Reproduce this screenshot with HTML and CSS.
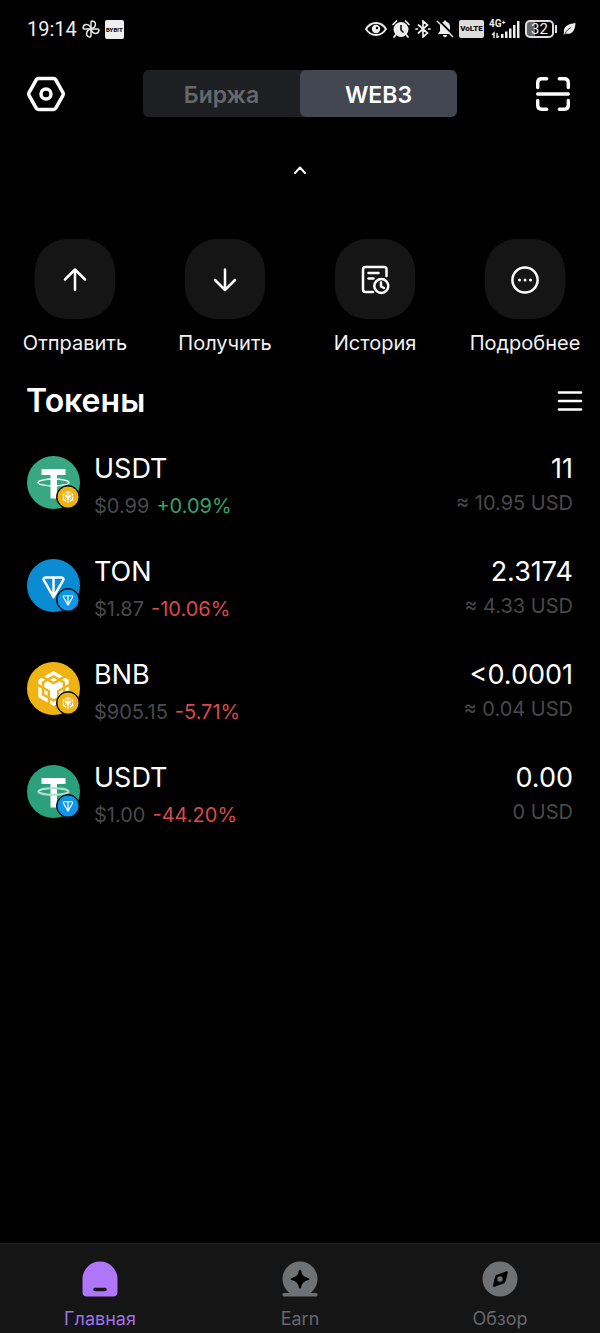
FILE: index.html
```html
<!DOCTYPE html>
<html lang="ru">
<head>
<meta charset="utf-8">
<meta name="viewport" content="width=device-width, initial-scale=1">
<title>Web3</title>
<link rel="stylesheet" href="styles.css">
</head>
<body>
<svg class="defs" width="0" height="0" aria-hidden="true">
  <symbol id="bnb" viewBox="0 0 24 24"><path fill="#fff" d="M5.631 3.676 12.001 0l6.367 3.676-2.34 1.358L12 2.716 7.972 5.034l-2.34-1.358Zm12.737 4.636-2.34-1.358L12 9.272 7.972 6.954l-2.34 1.358v2.716l4.026 2.318v4.636L12 19.341l2.341-1.359v-4.636l4.027-2.318V8.312Zm0 7.352v-2.716l-2.34 1.358v2.716l2.34-1.358Zm1.663.96-4.027 2.318v2.717l6.368-3.677V10.63l-2.34 1.358v4.636Zm-2.34-10.63 2.34 1.358v2.716l2.341-1.358V5.994l-2.34-1.358-2.342 1.358Zm-8.033 13.654v2.716L12 24l2.341-1.358v-2.716l-2.34 1.358-2.342-1.358Zm-4.026-6.7v2.716l2.34 1.358v-2.716l-2.34-1.358Zm4.026-6.954L12 7.352l2.341-1.358-2.34-1.358-2.342 1.358Zm-5.69 1.358 2.342-1.358-2.342-1.358-2.34 1.358v2.716l2.34 1.358V7.352Zm0 4.636L1.628 10.63v7.353l6.367 3.676v-2.717L3.97 16.624v-4.636Z"/></symbol>
  <symbol id="ton" viewBox="0 0 24 24"><path fill="none" stroke="#fff" stroke-width="2.600" stroke-linejoin="round" d="M3.500 1.600h17c1.600 0 2.300 1.500 1.600 2.700L12 22 1.900 4.300C1.200 3.100 1.900 1.600 3.500 1.600zM12 1.600v20"/></symbol>
  <symbol id="coin-bnb" viewBox="0 0 53 53"><circle cx="26.500" cy="26.500" r="26.500" fill="#efb413"/><use href="#bnb" x="9" y="9" width="35" height="35"/></symbol>
  <symbol id="coin-ton" viewBox="0 0 53 53"><circle cx="26.500" cy="26.500" r="26.500" fill="#0a8bd2"/><use href="#ton" x="15" y="17" width="23" height="23"/></symbol>
  <symbol id="coin-usdt" viewBox="0 0 53 53"><circle cx="26.500" cy="26.500" r="26.500" fill="#37a881"/><path fill="#fff" d="M14.500 13h24v6H30v23.500h-6.500V19h-9z"/><ellipse cx="26.500" cy="26.500" rx="15.500" ry="3.500" fill="none" stroke="#fff" stroke-width="1.300"/></symbol>
  <symbol id="coin-usdt-soft" viewBox="0 0 53 53"><circle cx="26.500" cy="26.500" r="26.500" fill="#2aa17a"/><path fill="#fff" d="M14.500 13h24v6H30v23.500h-6.500V19h-9z"/><ellipse cx="26.500" cy="26.500" rx="15" ry="3.300" fill="none" stroke="#b5ddd0" stroke-width="2"/></symbol>
  <symbol id="net-bnb" viewBox="0 0 22 22"><circle cx="11" cy="11" r="10.500" fill="#efb413"/><use href="#bnb" x="5" y="5" width="12" height="12"/></symbol>
  <symbol id="net-ton" viewBox="0 0 22 22"><circle cx="11" cy="11" r="10.500" fill="#0c97ec"/><use href="#ton" x="5.500" y="6" width="11" height="11"/></symbol>
</svg>

<div class="status">
  <div class="status-group">
    <time class="clock">19:14</time>
    <svg width="18" height="18" viewBox="0 0 18 18" fill="none" stroke="#e8e8e8" stroke-width="1.500" stroke-linejoin="round"><path id="blade" d="M9 9V2.200C9 1.500 9.500 1 10.200 1c2.200.3 3.400 1.900 3.200 3.700C13.200 6.800 11.400 8.400 9 9z"/><use href="#blade" transform="rotate(90 9 9)"/><use href="#blade" transform="rotate(180 9 9)"/><use href="#blade" transform="rotate(270 9 9)"/></svg>
    <span class="app-chip">BYB!T</span>
  </div>
  <div class="status-group status-right">
    <svg width="22" height="18" viewBox="0 0 22 18"><path d="M1 9c5-8 15-8 20 0-5 8-15 8-20 0z" fill="none" stroke="#eee" stroke-width="1.800"/><circle cx="11" cy="9" r="4.200" fill="#eee"/><circle cx="12" cy="8" r="1.200" fill="#000"/></svg>
    <svg width="18" height="18" viewBox="0 0 18 18"><circle cx="9" cy="9.500" r="7.500" fill="#eee"/><path d="M1 4.500 4.500 1M17 4.500 13.500 1M3.500 15 2 17M14.500 15l1.500 2" stroke="#eee" stroke-width="1.700" stroke-linecap="round"/><path d="M9 5v5l2.500 2.500" fill="none" stroke="#000" stroke-width="1.500"/></svg>
    <svg width="16" height="18" viewBox="0 0 16 18"><path d="m3.500 5 9 8L8 17V1l4.500 4-9 8M1 9h1.500M13.500 9H15" fill="none" stroke="#eee" stroke-width="1.700" stroke-linecap="round"/></svg>
    <svg width="18" height="18" viewBox="0 0 18 18"><path d="M9 0.500c.8 0 1.300.5 1.300 1.200 2.500.6 3.700 2.500 3.700 5V11l2 3H2l2-3V6.700c0-2.500 1.200-4.400 3.700-5C7.700 1 8.200.5 9 .5zM7 15h4c0 3-4 3-4 0z" fill="#eee"/><path d="m2.300 0 15.500 15.500" stroke="#000" stroke-width="2"/><path d="m1 1 16 16" stroke="#eee" stroke-width="1.500"/></svg>
    <span class="volte">VoLTE</span>
    <span class="cell"><span class="cell-type">4G⁺</span>
      <svg width="31" height="18" viewBox="0 0 31 18" fill="#eee"><path d="M12 14h2.500v4H12zM16 11.500h2.500V18H16zM20 8.500h2.500V18H20zM24 5h2.500v13H24zM28 1h2.500v17H28z"/><path d="M5 18v-5l-2 2M8 13v5l2-2" fill="none" stroke="#eee" stroke-width="1.400"/></svg></span>
    <span class="battery">32</span>
    <svg width="13" height="14" viewBox="0 0 13 14"><path d="M12.500 1C5 2 0 4.500 1 10.500L.5 13l2-1.500C9 13 12 9 12.500 1z" fill="#eee"/><path d="M2 11.500c1.500-3 3.500-4.500 6-6" stroke="#000" stroke-width=".8" fill="none"/></svg>
  </div>
</div>

<header class="top">
  <button class="icon-btn" aria-label="Настройки"><svg width="38" height="36" viewBox="0 0 38 36" fill="none" stroke="#fff" stroke-width="3.500" stroke-linejoin="round"><path d="M11.500 2.500h15q1.500 0 2.300 1.300l7 12.500q.9 1.700 0 3.400l-7 12.500q-.8 1.300-2.300 1.300h-15q-1.500 0-2.300-1.300l-7-12.500q-.9-1.700 0-3.400l7-12.500Q10 2.500 11.500 2.500z"/><circle cx="19" cy="18" r="5"/></svg></button>
  <div class="segment">
    <button class="segment-tab">Биржа</button>
    <button class="segment-tab active">WEB3</button>
  </div>
  <button class="icon-btn" aria-label="Сканировать"><svg width="36" height="36" viewBox="0 0 36 36" fill="none" stroke="#fff" stroke-width="3.400" stroke-linecap="round"><path d="M2.700 11.500V6.700q0-4 4-4h5M24.300 2.700h5q4 0 4 4v4.800M33.300 24.500v4.800q0 4-4 4h-5M11.700 33.300h-5q-4 0-4-4v-4.800M2.700 18h30.600"/></svg></button>
</header>

<main class="content">
  <button class="collapse" aria-label="Свернуть"><svg width="14" height="10" viewBox="0 0 14 10" fill="none" stroke="#fff" stroke-width="2" stroke-linecap="round" stroke-linejoin="round"><path d="m2 8 5-5.500L12 8"/></svg></button>

  <div class="actions">
    <button class="action"><span class="tile"><svg width="32" height="32" viewBox="0 0 32 32" class="line"><path d="M16 26V6M6 15.500 16 5.500l10 10"/></svg></span>Отправить</button>
    <button class="action"><span class="tile"><svg width="32" height="32" viewBox="0 0 32 32" class="line"><path d="M16 5.500v20M6 16l10 10 10-10"/></svg></span>Получить</button>
    <button class="action"><span class="tile"><svg width="32" height="32" viewBox="0 0 32 32" class="line"><path d="M14 28H6.500q-2.500 0-2.500-2.500v-20Q4 3 6.500 3h18.500Q27.500 3 27.500 5.500V12M9.500 9h10M9.500 14.500h5"/><circle cx="22.300" cy="22" r="7"/><path d="M22 18.500v4l3 1.500"/></svg></span>История</button>
    <button class="action"><span class="tile"><svg width="32" height="32" viewBox="0 0 32 32" class="line"><circle cx="16" cy="16" r="12.600"/><path class="dots" d="M10.500 16h0M16 16h0M21.500 16h0"/></svg></span>Подробнее</button>
  </div>

  <div class="section-head">
    <h1 class="title">Токены</h1>
    <button class="icon-btn" aria-label="Меню"><svg width="26" height="22" viewBox="0 0 26 22" stroke="#fff" stroke-width="2.600" stroke-linecap="round"><path d="M2 2.500h22M2 11h22M2 19.500h22"/></svg></button>
  </div>

  <ul class="tokens">
    <li class="token">
      <span class="coin"><svg class="coin-main"><use href="#coin-usdt"/></svg><svg class="coin-net"><use href="#net-bnb"/></svg></span>
      <div class="info"><div class="name">USDT</div><div class="price"><span>$0.99</span><span class="up">+0.09%</span></div></div>
      <div class="balance"><div class="name">11</div><div class="value">≈ 10.95 USD</div></div>
    </li>
    <li class="token">
      <span class="coin"><svg class="coin-main"><use href="#coin-ton"/></svg><svg class="coin-net"><use href="#net-ton"/></svg></span>
      <div class="info"><div class="name">TON</div><div class="price"><span>$1.87</span><span class="down">-10.06%</span></div></div>
      <div class="balance"><div class="name">2.3174</div><div class="value">≈ 4.33 USD</div></div>
    </li>
    <li class="token">
      <span class="coin"><svg class="coin-main"><use href="#coin-bnb"/></svg><svg class="coin-net"><use href="#net-bnb"/></svg></span>
      <div class="info"><div class="name">BNB</div><div class="price"><span>$905.15</span><span class="down">-5.71%</span></div></div>
      <div class="balance"><div class="name">&lt;0.0001</div><div class="value">≈ 0.04 USD</div></div>
    </li>
    <li class="token">
      <span class="coin"><svg class="coin-main"><use href="#coin-usdt-soft"/></svg><svg class="coin-net"><use href="#net-ton"/></svg></span>
      <div class="info"><div class="name">USDT</div><div class="price"><span>$1.00</span><span class="down">-44.20%</span></div></div>
      <div class="balance"><div class="name">0.00</div><div class="value">0 USD</div></div>
    </li>
  </ul>
</main>

<nav class="tabbar">
  <a class="tab current" href="#home"><svg width="36" height="36" viewBox="0 0 36 36"><path fill="#b076fa" d="M.5 18a17.500 17.500 0 0 1 35 0v13q0 4.500-4.500 4.500H5Q.5 35.500.5 31z"/><path d="M13 28.500h10" stroke="#171717" stroke-width="3.500" stroke-linecap="round"/></svg>Главная</a>
  <a class="tab" href="#earn"><svg width="36" height="36" viewBox="0 0 36 36"><path fill="#6f7275" d="M7.500 32a17.500 17.500 0 1 1 21 0H34q1.500 0 1.500 1.500v.5q0 1.500-1.500 1.500H2Q.5 35.500.5 34v-.5Q.5 32 2 32z"/><path fill="#000" d="M18 8.500q1 0 1.200 1.500.8 5.500 7 7 1.300.3 1.300 1t-1.300 1q-6.200 1.500-7 7Q19 27.500 18 27.500T16.800 26q-.8-5.500-7-7-1.300-.3-1.300-1t1.300-1q6.200-1.500 7-7Q17 8.500 18 8.500z"/></svg>Earn</a>
  <a class="tab" href="#browse"><svg width="36" height="36" viewBox="0 0 36 36"><circle cx="18" cy="18" r="17.500" fill="#6f7275"/><path fill="#000" d="M24.500 10.300q1.700-.3 1.300 1.400l-2.100 8.400q-.4 1.600-2 2.300l-9.200 3.300q-2 .6-1.500-1.400l2-8.400q.4-1.600 2-2.200z"/><circle cx="18" cy="18" r="2.700" fill="#6f7275"/></svg>Обзор</a>
</nav>
</body>
</html>
```
FILE: styles.css
```css
* { box-sizing: border-box; }

body {
  margin: 0;
  min-height: 100vh;
  display: flex;
  flex-direction: column;
  background: #000;
  color: #fff;
  font-family: Inter, "Noto Sans", sans-serif;
}

button {
  border: 0;
  padding: 0;
  background: none;
  color: inherit;
  font: inherit;
}

svg { display: block; flex: none; }
.defs { position: absolute; }

.status {
  display: flex;
  justify-content: space-between;
  align-items: center;
  height: 58px;
  padding: 0 24px 0 27px;
  color: #eee;
  font-family: Roboto, sans-serif;
}
.status-group { display: flex; align-items: center; gap: 5px; }
.clock { font-size: 20px; }
.app-chip {
  width: 19px;
  border-radius: 2px;
  background: #eee;
  color: #111;
  font-size: 6px;
  font-weight: 900;
  line-height: 19px;
  text-align: center;
}
.volte {
  width: 25px;
  border-radius: 2px;
  background: #ddd;
  color: #111;
  font-size: 8px;
  font-weight: 900;
  line-height: 18px;
  text-align: center;
}
.cell { position: relative; }
.cell-type {
  position: absolute;
  top: -1px;
  left: 0;
  font-size: 10px;
  font-weight: 700;
  line-height: 10px;
}
.battery {
  position: relative;
  width: 29px;
  margin-right: 4px;
  border: 2px solid #ddd;
  border-radius: 5px;
  background: linear-gradient(90deg, #666 32%, #000 32%);
  font-size: 15px;
  line-height: 14px;
  text-align: center;
}
.battery::after {
  content: "";
  position: absolute;
  top: 3px;
  right: -5px;
  width: 2px;
  height: 8px;
  background: #ddd;
}

.top {
  display: flex;
  justify-content: space-between;
  align-items: center;
  margin-top: 12px;
  padding: 0 29px 0 27px;
}
.segment {
  display: flex;
  flex: 0 1 314px;
  border-radius: 6px;
  background: #1e1f23;
}
.segment-tab {
  flex: 1;
  padding-top: 3px;
  border-radius: 6px;
  color: #66686c;
  font-size: 23px;
  font-weight: 600;
  line-height: 44px;
}
.segment-tab.active { background: #424751; color: #fff; }

.content { flex: 1; }
.collapse { display: block; margin: 48px auto 0; }

.actions {
  display: grid;
  grid-template-columns: repeat(4, 1fr);
  margin-top: 64px;
}
.action {
  display: flex;
  flex-direction: column;
  align-items: center;
  gap: 12px;
  color: #f2f2f2;
  font-size: 20px;
  line-height: 24px;
}
.tile {
  display: grid;
  place-items: center;
  width: 80px;
  height: 80px;
  padding-top: 2px;
  border-radius: 32px;
  background: #151515;
}
.line {
  fill: none;
  stroke: #fff;
  stroke-width: 2.5;
  stroke-linecap: round;
  stroke-linejoin: round;
}
.dots { stroke-width: 3; }

.section-head {
  display: flex;
  justify-content: space-between;
  align-items: center;
  margin-top: 25px;
  padding: 0 17px 0 26px;
}
.title { margin: 0; font-size: 32px; font-weight: 600; line-height: 42px; }

.tokens { margin: 31px 0 0; padding: 0; list-style: none; }
.token {
  display: flex;
  gap: 14px;
  height: 103px;
  padding: 0 27px;
}
.coin { position: relative; width: 53px; height: 53px; margin-top: 3px; }
.coin-main { width: 53px; height: 53px; }
.coin-net {
  position: absolute;
  right: 0;
  bottom: 0;
  width: 24px;
  height: 24px;
  border: 1px solid #0c1418;
  border-radius: 50%;
  background: #0c1418;
}
.info { flex: 1; }
.balance { text-align: right; }
.name { font-size: 27px; line-height: 32px; }
.price, .value { color: #48494b; font-size: 20px; line-height: 24px; }
.price { display: flex; gap: 7px; margin-top: 9px; }
.value { margin-top: 6px; }
.up { color: #34a466; }
.down { color: #d94a4e; }

.tabbar {
  display: grid;
  grid-template-columns: repeat(3, 1fr);
  border-top: 1px solid #242424;
  background: #151515;
}
.tab {
  display: flex;
  flex-direction: column;
  align-items: center;
  gap: 10px;
  padding: 17px 0 3px;
  color: #66686b;
  font-size: 18px;
  line-height: 23px;
  text-decoration: none;
}
.tab.current { color: #a271e5; }
```
